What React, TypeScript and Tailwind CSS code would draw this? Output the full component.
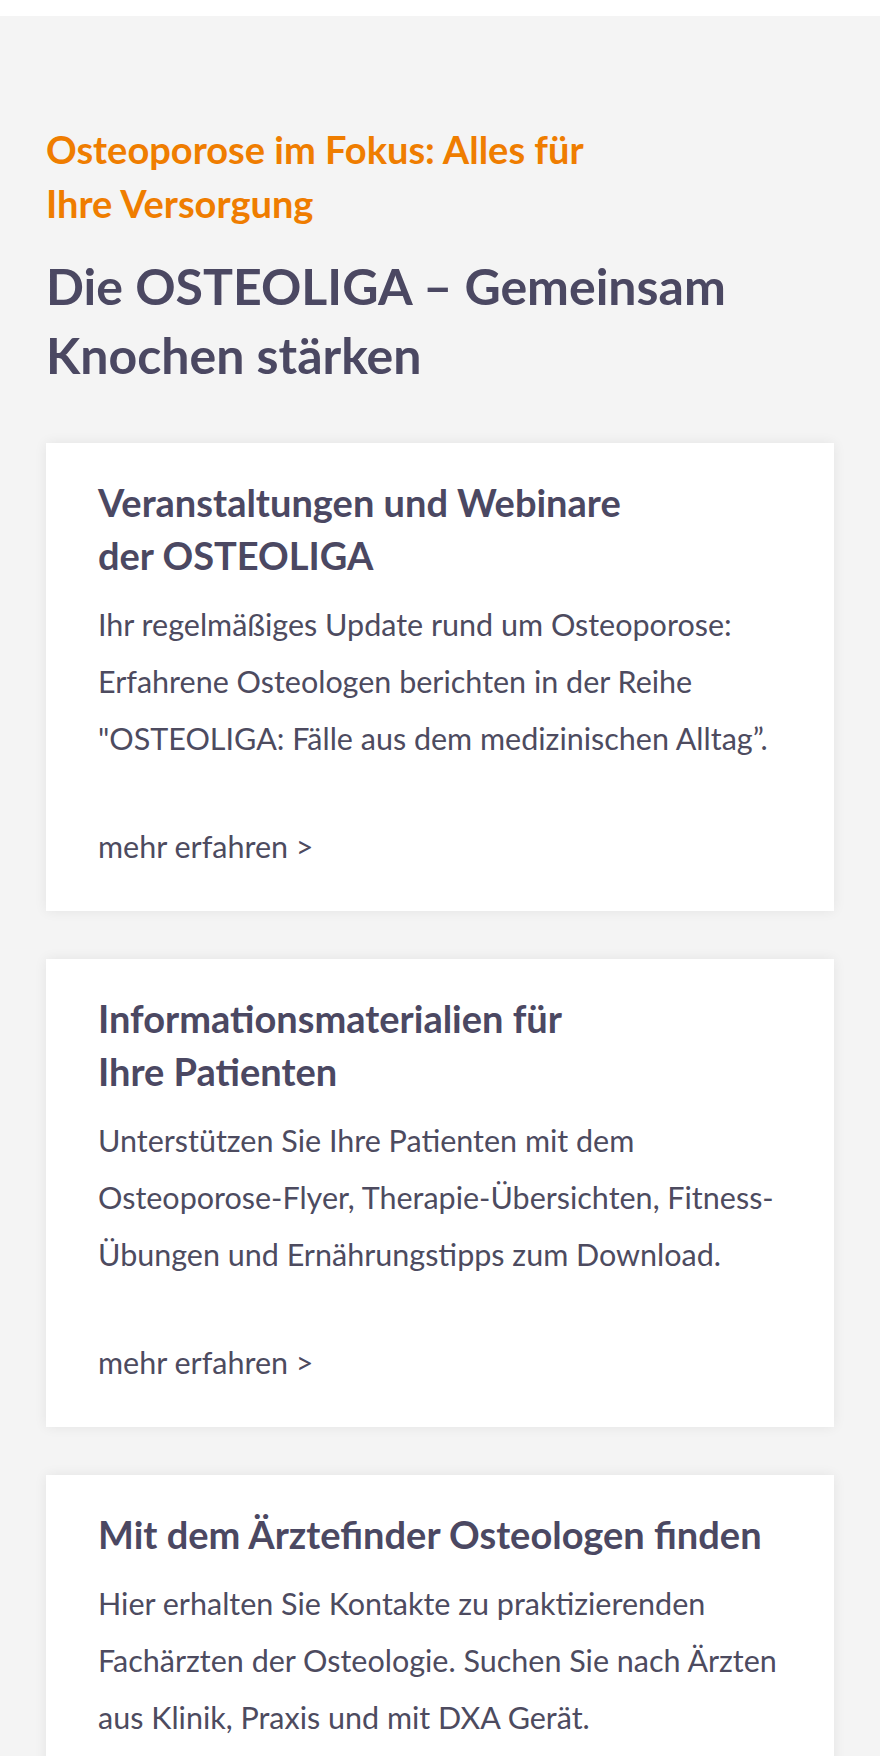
const cards = [
  {
    title: ['Veranstaltungen und Webinare', 'der OSTEOLIGA'],
    text: 'Ihr regelmäßiges Update rund um Osteoporose: Erfahrene Osteologen berichten in der Reihe "OSTEOLIGA: Fälle aus dem medizinischen Alltag”.',
  },
  {
    title: ['Informationsmaterialien für', 'Ihre Patienten'],
    text: 'Unterstützen Sie Ihre Patienten mit dem Osteoporose-Flyer, Therapie-Übersichten, Fitness-Übungen und Ernährungstipps zum Download.',
  },
  {
    title: ['Mit dem Ärztefinder Osteologen finden'],
    text: 'Hier erhalten Sie Kontakte zu praktizierenden Fachärzten der Osteologie. Suchen Sie nach Ärzten aus Klinik, Praxis und mit DXA Gerät.',
  },
];

function Card({ title, text }: { title: string[]; text: string }) {
  return (
    <div className="bg-white px-[52px] pt-[33px] pb-[36px] shadow-[0_0_12px_rgba(0,0,0,0.07)]">
      <h3 className="text-[38px] font-bold leading-[53px] text-[#4b4862]">
        {title.map((line, i) => (
          <span key={i} className="block">
            {line}
          </span>
        ))}
      </h3>
      <p className="mt-[14px] text-[30.5px] leading-[57px] text-[#4d4b5f]">{text}</p>
      <a href="#" className="mt-[51px] block text-[30.5px] leading-[57px] text-[#4d4b5f]">
        mehr erfahren &gt;
      </a>
    </div>
  );
}

export default function App() {
  return (
    <div className="min-h-screen bg-white font-['Source_Sans_Pro',Lato,sans-serif]">
      <div className="h-4 bg-white" />
      <main className="bg-[#f4f4f4] px-[46px] pt-[106px] pb-[60px]">
        <h4 className="text-[38px] font-bold leading-[54px] text-[#ef7d00]">
          Osteoporose im Fokus: Alles für
          <br />
          Ihre Versorgung
        </h4>
        <h2 className="mt-[22px] text-[50px] font-bold leading-[69px] text-[#4b4862]">
          Die OSTEOLIGA – Gemeinsam Knochen stärken
        </h2>
        <div className="mt-[53px] flex flex-col gap-[48px]">
          {cards.map((c, i) => (
            <Card key={i} {...c} />
          ))}
        </div>
      </main>
    </div>
  );
}
